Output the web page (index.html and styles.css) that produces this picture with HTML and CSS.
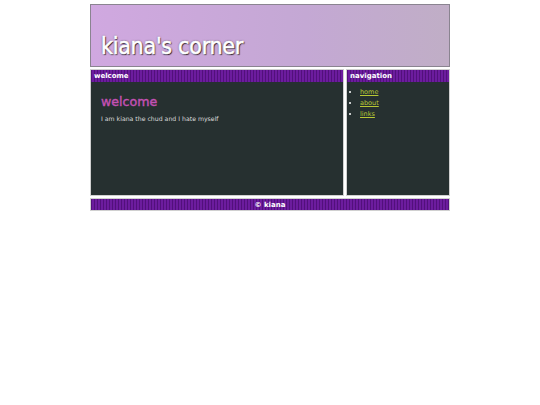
FILE: index.html
```html
<!DOCTYPE html>
<html>
<head>
<meta charset="utf-8">
<link rel="stylesheet" href="styles.css">
</head>
<body>
<div class="page">
  <header class="banner">
    <h1 class="site-title">kiana's corner</h1>
  </header>
  <div class="columns">
    <section class="panel main">
      <div class="bar">welcome</div>
      <div class="content">
        <h2 class="heading">welcome</h2>
        <p class="text">I am kiana the chud and I hate myself</p>
      </div>
    </section>
    <nav class="panel side">
      <div class="bar">navigation</div>
      <ul class="nav-list">
        <li><a href="#">home</a></li>
        <li><a href="#">about</a></li>
        <li><a href="#">links</a></li>
      </ul>
    </nav>
  </div>
  <footer class="footer">© kiana</footer>
</div>
</body>
</html>
```
FILE: styles.css
```css
html, body {
  margin: 0;
  padding: 0;
  background: #ffffff;
}
body {
  font-family: "DejaVu Sans", "Open Sans", sans-serif;
}
.page {
  width: 360px;
  margin: 4px auto 0;
  display: flex;
  flex-direction: column;
  gap: 2px;
}
.banner {
  height: 63px;
  box-sizing: border-box;
  border: 1px solid #8a8490;
  background: linear-gradient(90deg, #d0a8e0 0%, #c4a8d4 60%, #c0aec6 100%);
  display: flex;
  align-items: flex-end;
  padding: 0 0 7px 10px;
}
.site-title {
  margin: 0;
  font-family: "DejaVu Sans", sans-serif;
  font-size: 23px;
  font-weight: normal;
  color: #ffffff;
  -webkit-text-stroke: 0.6px #ffffff;
  letter-spacing: -0.3px;
  text-shadow: 1px 1px 1px #2a2030, 0 0 2px #4a3a50;
  line-height: 26px;
  transform: scaleX(0.9);
  transform-origin: left center;
}
.columns {
  display: flex;
  gap: 2px;
  height: 127px;
}
.panel {
  background: #263030;
  border: 1px solid #d0d0d0;
  box-sizing: border-box;
  display: flex;
  flex-direction: column;
}
.main {
  width: 254px;
}
.side {
  flex: 1;
}
.bar {
  height: 12px;
  line-height: 12px;
  padding-left: 3px;
  font-size: 7px;
  font-weight: bold;
  color: #ffffff;
  background: repeating-linear-gradient(90deg, #52107c 0 1px, #6c1c9e 1px 3px);
}
.content {
  padding: 12px 10px;
}
.heading {
  margin: 0 0 5px;
  font-size: 12.6px;
  font-weight: normal;
  -webkit-text-stroke: 0.4px #c450b4;
  color: #c450b4;
  line-height: 16px;
}
.text {
  margin: 0;
  font-size: 6.2px;
  color: #dcdcdc;
}
.nav-list {
  margin: 5px 0 0;
  padding-left: 13px;
  color: #ffffff;
  font-size: 6.5px;
  line-height: 11px;
}
.nav-list a {
  color: #b8c834;
}
.footer {
  height: 13px;
  line-height: 13px;
  text-align: center;
  font-size: 7px;
  font-weight: bold;
  color: #ffffff;
  background: repeating-linear-gradient(90deg, #52107c 0 1px, #6c1c9e 1px 3px);
  border: 1px solid #d0d0d0;
  box-sizing: border-box;
}
```
